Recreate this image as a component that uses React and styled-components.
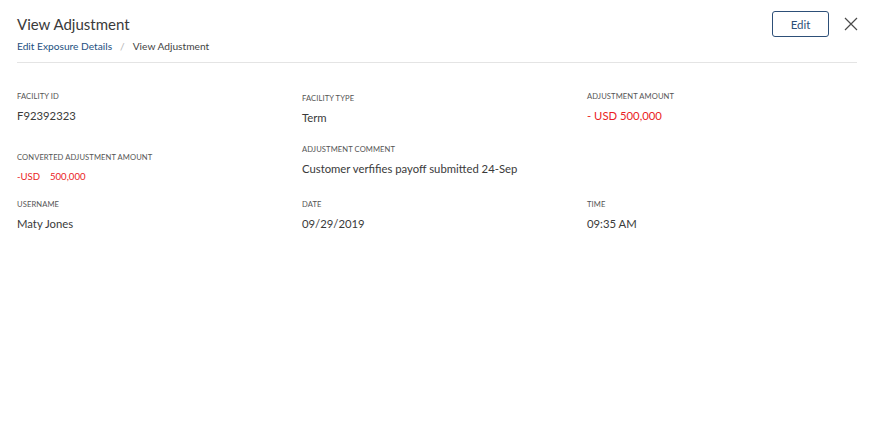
import React from "react";
import styled, { createGlobalStyle } from "styled-components";

const GlobalStyle = createGlobalStyle`
  body {
    margin: 0;
    background: #ffffff;
    font-family: Lato, "Noto Sans", sans-serif;
    color: #333333;
  }
`;

const App = () => {
  return (
    <>
      <GlobalStyle />
      <Page>
        <Header>
          <div>
            <Title>View Adjustment</Title>
            <Crumbs>
              <CrumbLink>Edit Exposure Details</CrumbLink>
              <Slash>/</Slash>
              <span>View Adjustment</span>
            </Crumbs>
          </div>
          <Actions>
            <EditButton>Edit</EditButton>
            <CloseButton aria-label="close">
              <svg width="14" height="14" viewBox="0 0 14 14">
                <path
                  d="M1 1 L13 13 M13 1 L1 13"
                  stroke="#4a4a4a"
                  strokeWidth="1.2"
                  fill="none"
                />
              </svg>
            </CloseButton>
          </Actions>
        </Header>
        <Divider />
        <Columns>
          <Stack gap={29}>
            <Field>
              <Label>Facility ID</Label>
              <Value>F92392323</Value>
            </Field>
            <Field>
              <Label>Converted Adjustment Amount</Label>
              <Value red small>
                -USD&nbsp;&nbsp;&nbsp; 500,000
              </Value>
            </Field>
          </Stack>
          <Stack gap={19} offset={2}>
            <Field>
              <Label>Facility Type</Label>
              <Value>Term</Value>
            </Field>
            <Field>
              <Label>Adjustment Comment</Label>
              <Value>Customer verfifies payoff submitted 24-Sep</Value>
            </Field>
          </Stack>
          <Stack>
            <Field>
              <Label>Adjustment Amount</Label>
              <Value red>- USD 500,000</Value>
            </Field>
          </Stack>
        </Columns>
        <Columns top={15}>
          <Field>
            <Label>Username</Label>
            <Value>Maty Jones</Value>
          </Field>
          <Field>
            <Label>Date</Label>
            <Value>09/29/2019</Value>
          </Field>
          <Field>
            <Label>Time</Label>
            <Value>09:35 AM</Value>
          </Field>
        </Columns>
      </Page>
    </>
  );
};

const Page = styled.div`
  padding: 11px 12px 0 17px;
`;

const Header = styled.div`
  display: flex;
  justify-content: space-between;
  align-items: flex-start;
`;

const Title = styled.h1`
  margin: 2px 0 0;
  font-size: 15px;
  font-weight: 400;
  line-height: 22px;
  color: #3a3a3a;
`;

const Crumbs = styled.div`
  margin-top: 4px;
  font-size: 10.2px;
  line-height: 14px;
  color: #444444;
  display: flex;
  align-items: center;
`;

const CrumbLink = styled.span`
  color: #24507f;
`;

const Slash = styled.span`
  color: #b5b5b5;
  margin: 0 8px;
`;

const Actions = styled.div`
  display: flex;
  align-items: center;
  gap: 15px;
`;

const EditButton = styled.button`
  width: 57px;
  height: 26px;
  border: 1px solid #2d4f78;
  border-radius: 3px;
  background: #ffffff;
  color: #2d4f78;
  font-family: Lato, "Noto Sans", sans-serif;
  font-size: 11.5px;
  cursor: pointer;
`;

const CloseButton = styled.button`
  border: none;
  background: none;
  padding: 0;
  display: flex;
  cursor: pointer;
`;

const Divider = styled.hr`
  margin: 9px 1px 0 0;
  border: none;
  border-top: 1px solid #e4e4e4;
`;

const Columns = styled.div`
  display: grid;
  grid-template-columns: 285px 285px 1fr;
  margin-top: ${(p) => (p.top != null ? p.top : 28)}px;
`;

const Stack = styled.div`
  display: flex;
  flex-direction: column;
  gap: ${(p) => p.gap || 0}px;
  padding-top: ${(p) => p.offset || 0}px;
`;

const Field = styled.div`
  display: flex;
  flex-direction: column;
  gap: 8px;
`;

const Label = styled.div`
  font-size: 7.6px;
  line-height: 10px;
  text-transform: uppercase;
  color: #555555;
  letter-spacing: 0.1px;
`;

const Value = styled.div`
  font-size: ${(p) => (p.small ? 9.6 : 11.3)}px;
  line-height: 14px;
  color: ${(p) => (p.red ? "#ea1c24" : "#3a3a3a")};
  white-space: pre;
`;

export default App;
